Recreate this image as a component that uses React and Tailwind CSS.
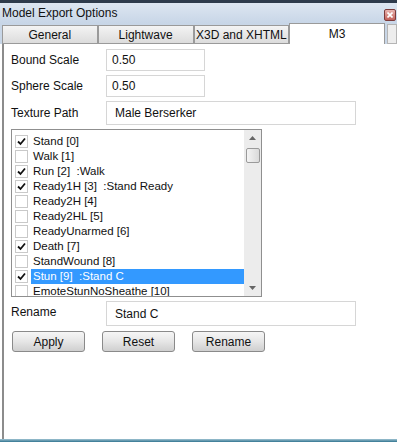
const items = [
  { name: "Stand [0]", checked: true },
  { name: "Walk [1]" },
  { name: "Run [2]  :Walk", checked: true },
  { name: "Ready1H [3]  :Stand Ready", checked: true },
  { name: "Ready2H [4]" },
  { name: "Ready2HL [5]" },
  { name: "ReadyUnarmed [6]" },
  { name: "Death [7]", checked: true },
  { name: "StandWound [8]" },
  { name: "Stun [9]  :Stand C", checked: true, selected: true },
  { name: "EmoteStunNoSheathe [10]" },
];

const font = { fontFamily: '"Liberation Sans", Arial, sans-serif' };

function Check({ checked }) {
  return (
    <div className="w-[13px] h-[13px] border border-[#c9c9c9] bg-white flex items-center justify-center shrink-0">
      {checked && (
        <svg width="9" height="9" viewBox="0 0 9 9">
          <path d="M1 4.5 L3.5 7 L8 1.5" stroke="#111" strokeWidth="1.8" fill="none" />
        </svg>
      )}
    </div>
  );
}

function Button({ children }) {
  return (
    <button className="w-[73px] h-[21px] rounded-[3px] border border-[#8a8a8a] bg-gradient-to-b from-[#f6f6f6] via-[#e6e6e6] to-[#cfcfcf] text-[12px] text-[#111] leading-none">
      {children}
    </button>
  );
}

function Tab({ children, active }) {
  if (active)
    return (
      <div className="w-[96px] h-[21px] bg-white border border-b-0 border-[#9a9a9a] flex items-center justify-center text-[12px] text-[#111]">
        {children}
      </div>
    );
  return (
    <div className="w-[96px] h-[19px] mt-[2px] border border-[#9a9a9a] bg-gradient-to-b from-[#f4f4f4] to-[#dcdcdc] flex items-center justify-center text-[12px] text-[#111]">
      {children}
    </div>
  );
}

export default function App() {
  return (
    <div className="w-[397px] h-[442px] bg-white flex flex-col overflow-hidden" style={font}>
      <div className="h-[3px] bg-[#2e3b4c]" />
      <div className="h-[20px] bg-gradient-to-b from-[#dde6f1] to-[#c8d6e7] flex items-center justify-between pl-[2px] pr-[1px]">
        <span className="text-[12px] text-[#111]">Model Export Options</span>
        <div className="w-[12px] h-[12px] mt-[3px] rounded-[2px] border border-[#7b3b3b] bg-gradient-to-b from-[#e8b4b0] to-[#c2605a] flex items-center justify-center">
          <svg width="6" height="6" viewBox="0 0 6 6">
            <path d="M0.5 0.5 L5.5 5.5 M5.5 0.5 L0.5 5.5" stroke="white" strokeWidth="1.6" />
          </svg>
        </div>
      </div>
      <div className="flex bg-[#c8d6e7] pl-[2px] h-[21px]">
        <Tab>General</Tab>
        <Tab>Lightwave</Tab>
        <Tab>X3D and XHTML</Tab>
        <Tab active>M3</Tab>
        <div className="w-[10px] h-[20px] mt-[1px] ml-[2px] bg-[#ededed] border border-[#b5b5b5]" />
      </div>
      <div className="flex-1 ml-[2px] border-l-2 border-[#8c8c8c] bg-white relative">
        <div className="pl-[7px] pt-[5px] text-[12px] text-[#111]">
          <div className="flex items-center h-[22px]">
            <span className="w-[95px]">Bound Scale</span>
            <div className="w-[99px] h-[22px] border border-[#d6d6d6] flex items-center pl-[5px]">0.50</div>
          </div>
          <div className="flex items-center h-[22px] mt-[4px]">
            <span className="w-[95px]">Sphere Scale</span>
            <div className="w-[99px] h-[22px] border border-[#d6d6d6] flex items-center pl-[5px]">0.50</div>
          </div>
          <div className="flex items-center h-[24px] mt-[4px]">
            <span className="w-[95px]">Texture Path</span>
            <div className="w-[250px] h-[24px] border border-[#d6d6d6] flex items-center pl-[8px]">Male Berserker</div>
          </div>
          <div className="mt-[4px] w-[251px] h-[168px] border border-[#8f8f8f] flex overflow-hidden text-[11.5px]">
            <div className="flex-1 pt-[4px] pl-[3px]">
              {items.map((it) => (
                <div key={it.name} className="flex items-center h-[15px]">
                  <Check checked={it.checked} />
                  <span
                    className={`ml-[3px] pl-[2px] flex-1 h-[15px] flex items-center whitespace-pre ${
                      it.selected ? "bg-[#3399ff] text-white" : ""
                    }`}
                  >
                    {it.name}
                  </span>
                </div>
              ))}
            </div>
            <div className="w-[17px] bg-[#ececec] flex flex-col items-center">
              <div className="h-[16px] flex items-center justify-center">
                <svg width="7" height="4" viewBox="0 0 7 4"><path d="M0 4 L3.5 0 L7 4Z" fill="#666" /></svg>
              </div>
              <div className="w-[14px] h-[15px] mt-[2px] rounded-[2px] border border-[#9a9a9a] bg-gradient-to-r from-[#f4f4f4] to-[#dadada]" />
              <div className="flex-1" />
              <div className="h-[16px] flex items-center justify-center">
                <svg width="7" height="4" viewBox="0 0 7 4"><path d="M0 0 L3.5 4 L7 0Z" fill="#666" /></svg>
              </div>
            </div>
          </div>
          <div className="flex items-start h-[25px] mt-[4px]">
            <span className="w-[95px] pt-[2px]">Rename</span>
            <div className="w-[250px] h-[25px] border border-[#d6d6d6] flex items-center pl-[8px]">Stand C</div>
          </div>
          <div className="flex gap-[17px] mt-[5px] pl-[1px]">
            <Button>Apply</Button>
            <Button>Reset</Button>
            <Button>Rename</Button>
          </div>
        </div>
      </div>
      <div className="h-[3px] bg-gradient-to-b from-[#9fc3d2] to-[#2f7590]" />
    </div>
  );
}
